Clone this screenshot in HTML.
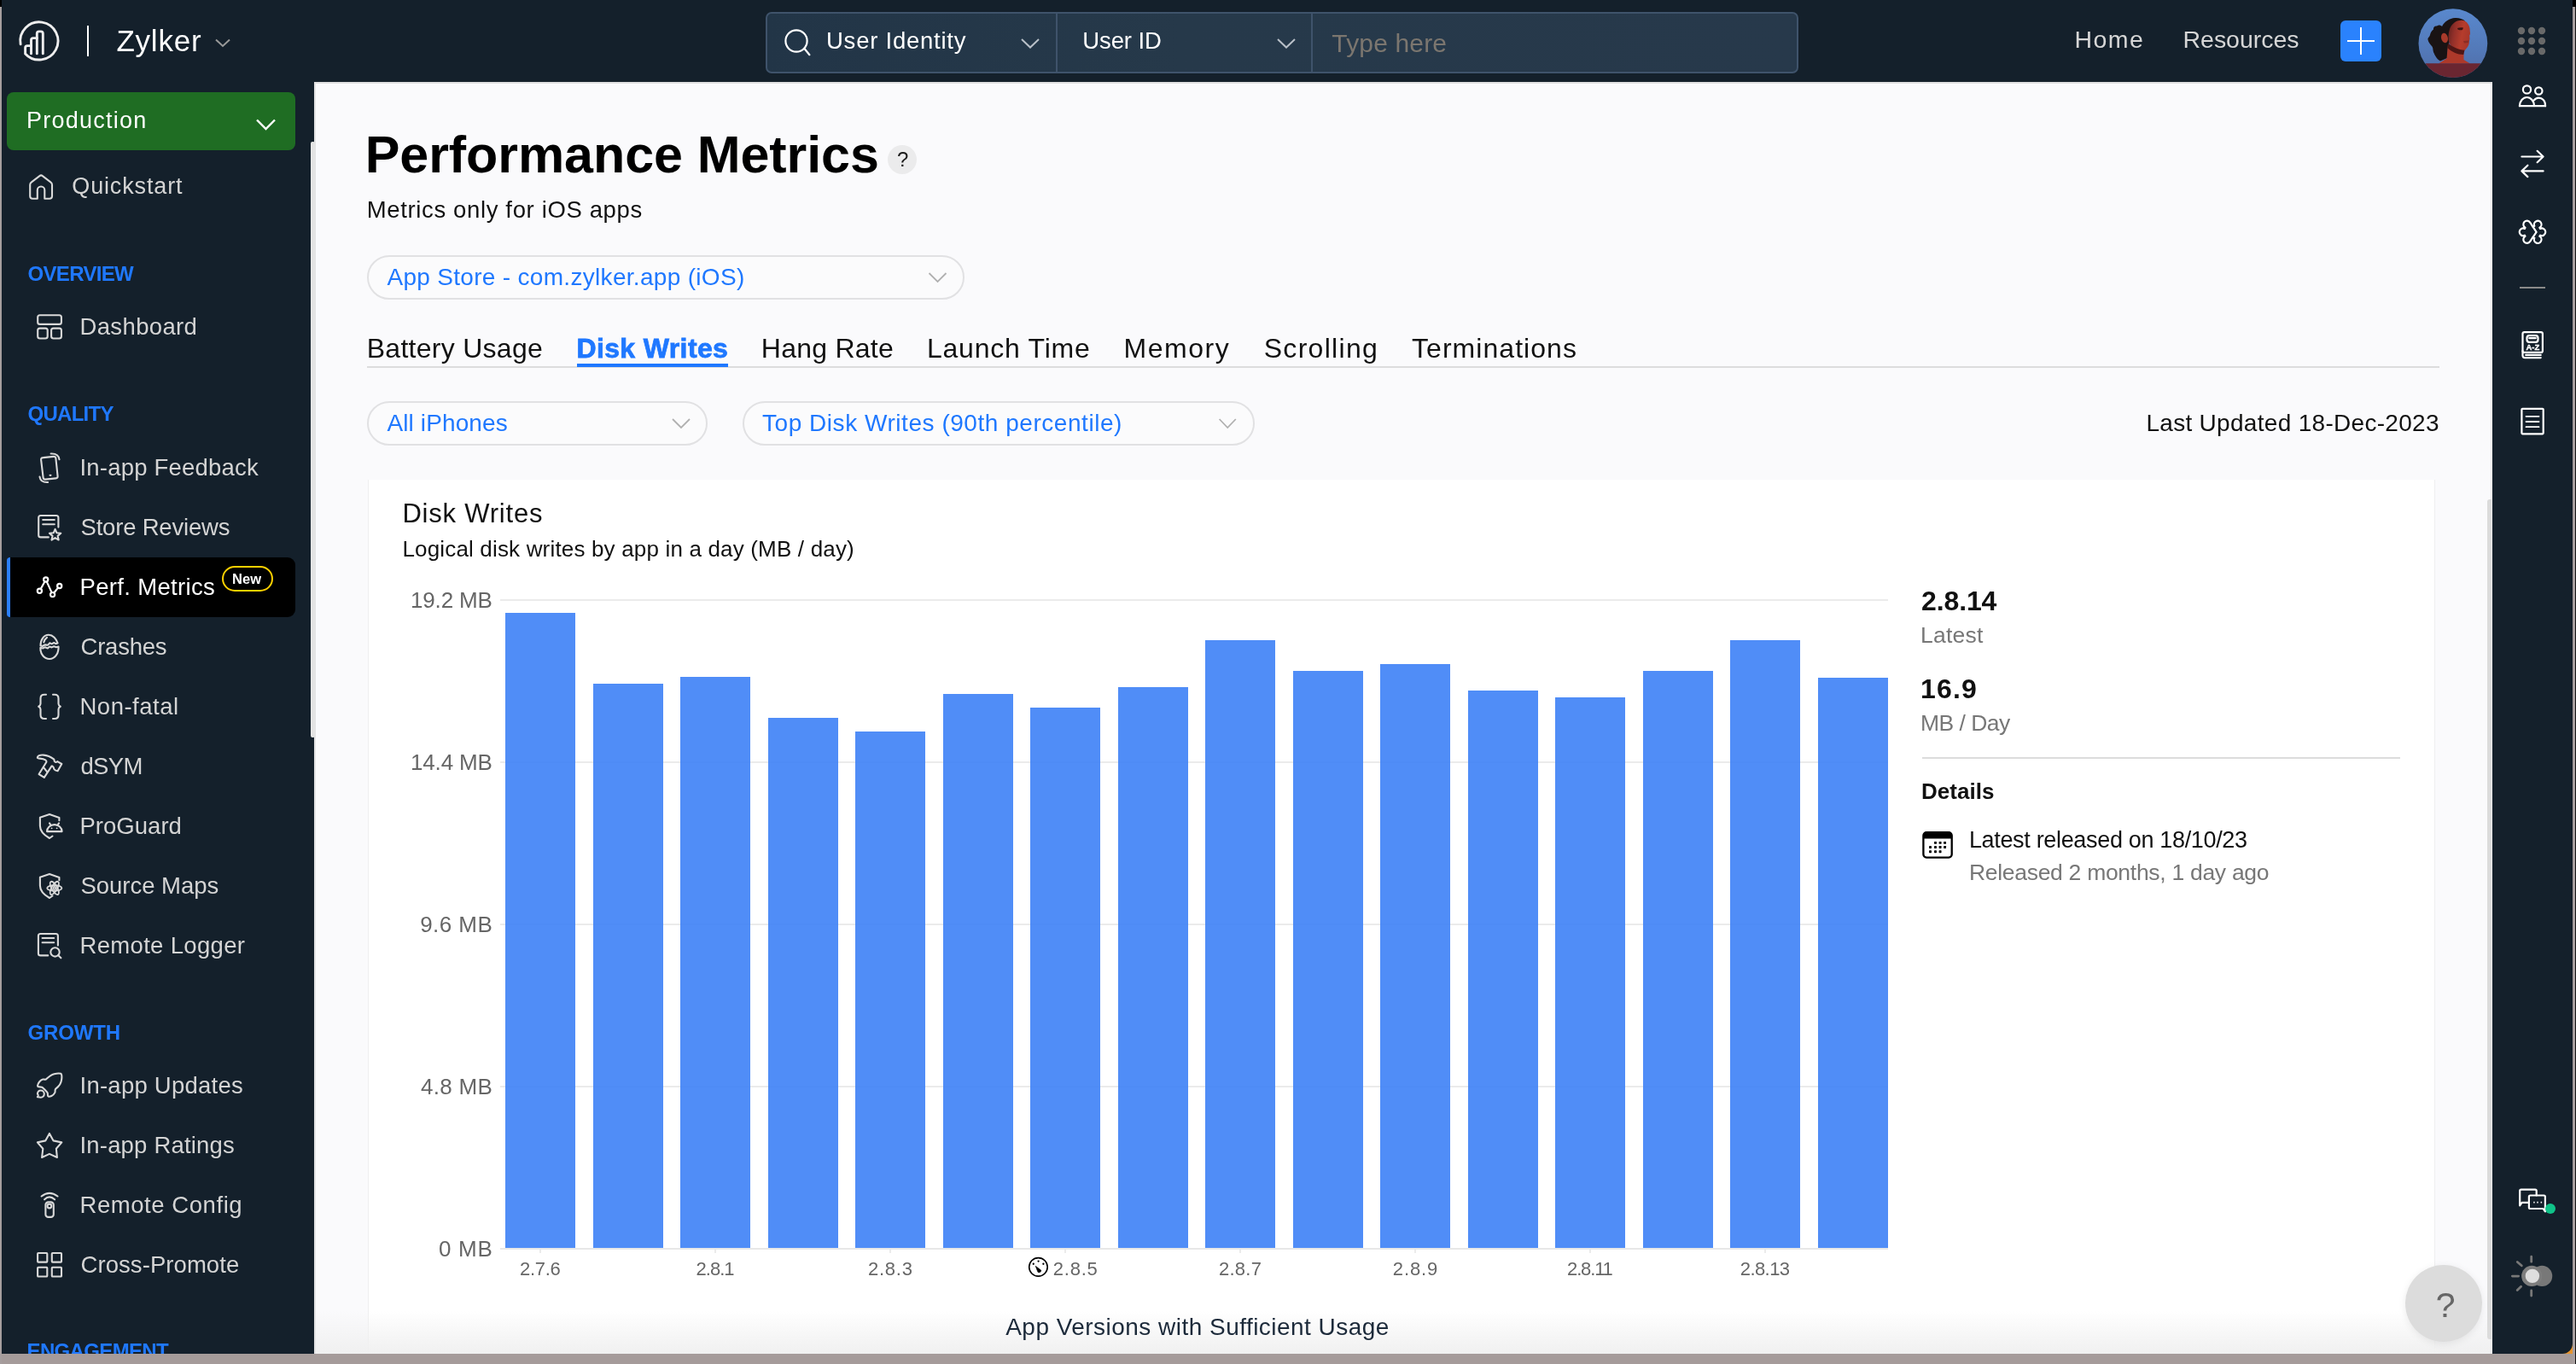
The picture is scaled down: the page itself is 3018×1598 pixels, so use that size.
<!DOCTYPE html>
<html><head><meta charset="utf-8"><title>Performance Metrics</title>
<style>
*{box-sizing:border-box;margin:0;padding:0}
html,body{width:3018px;height:1598px;overflow:hidden;background:#14202b;font-family:"Liberation Sans",sans-serif}
body{position:relative}
.a{position:absolute}
.t{position:absolute;white-space:nowrap;font-family:"Liberation Sans",sans-serif}
svg{position:absolute;overflow:visible}
.ic{fill:none;stroke:#d9d9d9;stroke-width:2.1;stroke-linecap:round;stroke-linejoin:round}
.iw{fill:none;stroke:#fff;stroke-width:2.2;stroke-linecap:round;stroke-linejoin:round}
.pill{position:absolute;height:52px;border:2px solid #e1e1e3;border-radius:26px;background:#fbfbfc}
.gl{position:absolute;left:586px;width:1626px;height:2px;background:#ebebeb}
.bar{position:absolute;width:82px;background:rgba(61,129,246,0.9)}
.tick{position:absolute;top:1464px;width:2px;height:4px;background:#ebebeb}
</style></head>
<body>
<!-- main content -->
<div class="a" style="left:368px;top:96px;width:2552px;height:1490px;background:#fafafc;border-left:2px solid #e3e3e4;border-top:2px solid #e0e0e1"></div>
<div class="a" style="left:431px;top:562px;width:2422px;height:1024px;background:#fff;border-left:1px solid #efeff0;border-right:1px solid #efeff0"></div>
<div class="a" style="left:370px;top:1536px;width:2550px;height:50px;background:linear-gradient(to bottom,rgba(240,240,240,0),rgba(240,240,240,1))"></div>
<!-- sidebar scrollbar -->
<div class="a" style="left:364px;top:166px;width:5px;height:698px;background:#e4e4e4;border-radius:2px"></div>
<!-- content scrollbar -->
<div class="a" style="left:2918px;top:98px;width:2px;height:1488px;background:#e9e9ea"></div>
<div class="a" style="left:2914px;top:585px;width:5px;height:984px;background:#dbdbdb;border-radius:3px 0 0 3px"></div>
<!-- top search -->
<div class="a" style="left:897px;top:14px;width:1210px;height:72px;border:2px solid #3f536b;border-radius:7px;background:linear-gradient(to right,#223547,#26394a 40%,#27394b)"></div>
<div class="a" style="left:1237px;top:16px;width:2px;height:68px;background:#3f536b"></div>
<div class="a" style="left:1536px;top:16px;width:2px;height:68px;background:#3f536b"></div>
<!-- plus -->
<div class="a" style="left:2742px;top:24px;width:48px;height:48px;border-radius:6px;background:#2a82fd"></div>
<div class="a" style="left:2750px;top:47px;width:32px;height:2px;background:#fff"></div>
<div class="a" style="left:2765px;top:32px;width:2px;height:32px;background:#fff"></div>
<!-- production -->
<div class="a" style="left:8px;top:108px;width:338px;height:68px;border-radius:8px;background:#1f6d23"></div>
<!-- active item -->
<div class="a" style="left:8px;top:653px;width:338px;height:70px;border-radius:4px 9px 9px 4px;background:#000;border-left:4px solid #2b7fff"></div>
<div class="a" style="left:260px;top:663px;width:60px;height:30px;border:2.5px solid #ffd100;border-radius:15px"></div>
<!-- logo divider -->
<div class="a" style="left:102px;top:30px;width:2px;height:36px;background:#fff"></div>
<!-- pills -->
<div class="pill" style="left:430px;top:299px;width:700px"></div>
<div class="pill" style="left:430px;top:470px;width:399px"></div>
<div class="pill" style="left:870px;top:470px;width:600px"></div>
<!-- tabs line -->
<div class="a" style="left:430px;top:429px;width:2428px;height:2px;background:#dcdcdd"></div>
<div class="a" style="left:676px;top:426px;width:177px;height:4px;background:#1f78ff"></div>
<!-- help small -->
<div class="a" style="left:1040px;top:170px;width:34px;height:34px;border-radius:17px;background:#ebebec"></div>
<!-- help big -->
<div class="a" style="left:2818px;top:1482px;width:90px;height:90px;border-radius:45px;background:#dcdcdc;box-shadow:0 2px 10px rgba(0,0,0,.08)"></div>
<!-- right panel divider -->
<div class="a" style="left:2252px;top:887px;width:560px;height:2px;background:#dcdcdc"></div>
<!-- right sidebar divider -->
<div class="a" style="left:2952px;top:336px;width:30px;height:2px;background:#8a8a8a"></div>
<div class="gl" style="top:701.7px"></div>
<div class="gl" style="top:891.8px"></div>
<div class="gl" style="top:1081.8px"></div>
<div class="gl" style="top:1271.9px"></div>
<div class="gl" style="top:1462px;background:#e8e8e8"></div>
<div class="bar" style="left:592.4px;top:717.7px;height:744.3px"></div>
<div class="bar" style="left:694.9px;top:801.2px;height:660.8px"></div>
<div class="bar" style="left:797.4px;top:793.2px;height:668.8px"></div>
<div class="bar" style="left:899.9px;top:840.7px;height:621.3px"></div>
<div class="bar" style="left:1002.4px;top:856.8px;height:605.2px"></div>
<div class="bar" style="left:1104.8px;top:813.1px;height:648.9px"></div>
<div class="bar" style="left:1207.3px;top:829.2px;height:632.8px"></div>
<div class="bar" style="left:1309.8px;top:805.1px;height:656.9px"></div>
<div class="bar" style="left:1412.3px;top:749.9px;height:712.1px"></div>
<div class="bar" style="left:1514.8px;top:785.5px;height:676.5px"></div>
<div class="bar" style="left:1617.3px;top:777.5px;height:684.5px"></div>
<div class="bar" style="left:1719.8px;top:809.3px;height:652.7px"></div>
<div class="bar" style="left:1822.3px;top:817.0px;height:645.0px"></div>
<div class="bar" style="left:1924.8px;top:785.5px;height:676.5px"></div>
<div class="bar" style="left:2027.3px;top:749.9px;height:712.1px"></div>
<div class="bar" style="left:2129.8px;top:793.5px;height:668.5px"></div>
<div class="tick" style="left:632.4px"></div>
<div class="tick" style="left:837.4px"></div>
<div class="tick" style="left:1042.3px"></div>
<div class="tick" style="left:1247.3px"></div>
<div class="tick" style="left:1452.3px"></div>
<div class="tick" style="left:1657.3px"></div>
<div class="tick" style="left:1862.3px"></div>
<div class="tick" style="left:2067.3px"></div>
<div class="a" style="left:0;top:0;width:3018px;height:1598px;will-change:transform">
<svg class="" style="left:16px;top:18px" width="60" height="60" viewBox="0 0 60 60"><g fill="none" stroke="#eeeeee" stroke-width="2.9" stroke-linecap="round" stroke-linejoin="round">
<path d="M8.1 33.8 A22.1 22.1 0 1 1 13.6 44.9 L13.6 38 Q13.6 35.6 16 35.6 L20.5 35.6"/>
<path d="M20.5 44.9 L20.5 29 Q20.5 26.6 22.9 26.6 L27.3 26.6"/>
<path d="M27.3 44.9 L27.3 21.3 Q27.3 18.9 29.7 18.9 L31.9 18.9 Q34.3 18.9 34.3 21.3 L34.3 44.9"/></g></svg>
<svg style="left:0;top:0" width="1" height="1"><path d="M253 46.5 L261.0 54 L269 46.5" fill="none" stroke="#9a9a9a" stroke-width="2" stroke-linecap="butt" stroke-linejoin="miter"/></svg>
<svg style="left:0;top:0" width="1" height="1"><path d="M301 140.5 L311.5 151 L322 140.5" fill="none" stroke="#ffffff" stroke-width="2.4" stroke-linecap="butt" stroke-linejoin="miter"/></svg>
<svg style="left:0;top:0" width="1" height="1"><path d="M1197 46 L1207.0 55.5 L1217 46" fill="none" stroke="#b9c0c8" stroke-width="2" stroke-linecap="butt" stroke-linejoin="miter"/></svg>
<svg style="left:0;top:0" width="1" height="1"><path d="M1497 46 L1507.0 55.5 L1517 46" fill="none" stroke="#b9c0c8" stroke-width="2" stroke-linecap="butt" stroke-linejoin="miter"/></svg>
<svg style="left:0;top:0" width="1" height="1"><path d="M1088.5 320 L1098.5 330 L1108.5 320" fill="none" stroke="#b0b0b0" stroke-width="1.8" stroke-linecap="butt" stroke-linejoin="miter"/></svg>
<svg style="left:0;top:0" width="1" height="1"><path d="M788 491 L798.0 501 L808 491" fill="none" stroke="#b0b0b0" stroke-width="1.8" stroke-linecap="butt" stroke-linejoin="miter"/></svg>
<svg style="left:0;top:0" width="1" height="1"><path d="M1428.6 491 L1438.1999999999998 501 L1447.8 491" fill="none" stroke="#b0b0b0" stroke-width="1.8" stroke-linecap="butt" stroke-linejoin="miter"/></svg>
<svg class="iw" style="left:915px;top:30px" width="40" height="40" viewBox="0 0 40 40"><circle cx="18" cy="18" r="12.6"/><path d="M27.3 26.8 L33.4 34.2"/></svg>
<svg style="left:0;top:0" width="1" height="1"><circle cx="2954" cy="36" r="4.2" fill="#696969"/><circle cx="2954" cy="48" r="4.2" fill="#696969"/><circle cx="2954" cy="60" r="4.2" fill="#696969"/><circle cx="2966" cy="36" r="4.2" fill="#696969"/><circle cx="2966" cy="48" r="4.2" fill="#696969"/><circle cx="2966" cy="60" r="4.2" fill="#696969"/><circle cx="2978" cy="36" r="4.2" fill="#696969"/><circle cx="2978" cy="48" r="4.2" fill="#696969"/><circle cx="2978" cy="60" r="4.2" fill="#696969"/></svg>
<svg class="ic" style="left:28px;top:198px" width="40" height="40" viewBox="0 0 40 40"><path d="M15.8 34.75 L10.2 34.75 Q7.2 34.75 7.2 31.75 L7.2 18.5 Q7.2 16.5 8.9 15.3 L18.4 8.1 Q20.1 6.8 21.8 8.1 L31.3 15.3 Q33 16.5 33 18.5 L33 31.75 Q33 34.75 30 34.75 L24.3 34.75 L24.3 24.75 A4.25 4.25 0 0 0 15.8 24.75 Z"/></svg>
<svg class="ic" style="left:38px;top:362px" width="40" height="40" viewBox="0 0 40 40"><rect x="6.2" y="7.2" width="27.7" height="10.7" rx="2.5"/><rect x="6.2" y="22.6" width="11.5" height="11.9" rx="2.5"/><rect x="22.1" y="22.6" width="11.8" height="11.9" rx="2.5"/></svg>
<svg class="ic" style="left:38px;top:526px" width="40" height="44" viewBox="0 0 40 44"><path d="M12.6 10.1 L24.8 8.9 Q27.2 8.7 27.4 11.1 L29.6 31.9 Q29.8 34.2 27.5 34.4 L15.2 35.6 Q12.9 35.8 12.6 33.5 L10.1 12.7 Q9.9 10.3 12.6 10.1 Z"/><ellipse cx="21" cy="30.8" rx="1.6" ry="1.1" fill="#d9d9d9" stroke="none"/><path d="M21.6 5.5 Q30.5 5 31.5 12.3"/><path d="M8.5 32.6 Q9.5 39.5 18.1 39"/></svg>
<svg class="ic" style="left:38px;top:598px" width="40" height="40" viewBox="0 0 40 40"><path d="M18.8 31.4 L9.7 31.4 Q7.2 31.4 7.2 28.9 L7.2 8.5 Q7.2 6 9.7 6 L27.9 6 Q30.4 6 30.4 8.5 L30.4 19.6"/><path d="M12.2 11 L25.8 11 M12.2 16.3 L25.8 16.3"/><path d="M26.60 21.90 L28.48 26.31 L33.26 26.74 L29.64 29.89 L30.71 34.56 L26.60 32.10 L22.49 34.56 L23.56 29.89 L19.94 26.74 L24.72 26.31 Z"/></svg>
<svg class="iw" style="left:38px;top:668px" width="40" height="40" viewBox="0 0 40 40"><path d="M9.7 22 L14.5 13.3 M16.7 13.4 L22.6 26.1 M25.3 26.5 L30 20.6"/><circle cx="8.4" cy="24.3" r="2.6"/><circle cx="15.7" cy="11" r="2.6"/><circle cx="23.6" cy="28.6" r="2.6"/><circle cx="31.7" cy="18.5" r="2.6"/></svg>
<svg class="ic" style="left:38px;top:738px" width="40" height="40" viewBox="0 0 40 40"><path d="M9.5 18.5 C9.5 11 13.5 5.7 19 5.7 C24 5.7 28 10.5 29.6 15.5 L27.3 16.2 L25.2 15 L22.6 16.4 L20.2 15.3 L18.2 17.7 L14.7 17.4 L11.7 19 Z"/><path d="M9.4 20.8 L12.3 21.5 L14.7 20.2 L17.9 21.4 L20.2 19.5 L22.6 20.4 L25.2 19.2 L27.9 20.2 L30.5 19.6 C31 28 26 34 20 34 C14 34 9 28.5 9.4 20.8 Z"/><path d="M17 8.8 Q14.2 10.8 13.3 14.4"/></svg>
<svg class="ic" style="left:38px;top:808px" width="40" height="40" viewBox="0 0 40 40"><path d="M16 5.7 L14 5.7 Q9.5 5.7 9.5 10.2 L9.5 16.5 Q9.5 18.6 7.2 19.8 Q9.5 21 9.5 23.1 L9.5 29.5 Q9.5 34 14 34 L16 34"/><path d="M24 5.7 L26 5.7 Q30.5 5.7 30.5 10.2 L30.5 16.5 Q30.5 18.6 32.8 19.8 Q30.5 21 30.5 23.1 L30.5 29.5 Q30.5 34 26 34 L24 34"/></svg>
<svg class="ic" style="left:38px;top:878px" width="40" height="40" viewBox="0 0 40 40"><path d="M5.9 9.1 C7 6.5 11 6.4 13.2 6.6 C16 6.8 20.5 8 25 11.4 C26 12.2 25.3 13.2 25.8 13.8 C26.3 14.8 27 15.1 27.6 15 C28.4 14.9 28.8 14.1 29.3 14.1 L34.3 17 L29.6 25.2 C28.5 25 26 24 25.5 23.2 C24.8 22.2 25 21.2 24.3 20.5 C23.8 19.8 23 19.3 22.6 19.4 L13.8 32.8 L7.6 29 L16.4 14.7 C16.6 13.5 16 12.8 15.2 12.3 C13.5 11.2 11 10.8 8.8 10.6 C6.5 10.5 5.5 10 5.9 9.1 Z"/><path d="M12.9 20.8 L17.3 26.4"/></svg>
<svg class="ic" style="left:38px;top:948px" width="40" height="40" viewBox="0 0 40 40"><path d="M31.4 13.2 L31.4 10 L20 5.9 L8.9 9.7 L8.9 19.5 C8.9 25 13 30 20 34 L23.5 31.5"/><path d="M17 26.1 A8.8 8 0 0 1 34.6 26.1 Z"/><path d="M20 16.4 L21.7 19 M31 16.4 L29.3 19"/><circle cx="22.6" cy="22.3" r="0.9" fill="#d9d9d9" stroke="none"/><circle cx="28.6" cy="22.3" r="0.9" fill="#d9d9d9" stroke="none"/></svg>
<svg class="ic" style="left:38px;top:1018px" width="40" height="40" viewBox="0 0 40 40"><path d="M31.4 13.2 L31.4 10 L20 5.9 L8.9 9.7 L8.9 19.5 C8.9 25 13 30 20 34 L23.5 31.5"/><g stroke-width="1.8"><ellipse cx="25.8" cy="22.4" rx="8.6" ry="3.3"/><ellipse cx="25.8" cy="22.4" rx="8.6" ry="3.3" transform="rotate(60 25.8 22.4)"/><ellipse cx="25.8" cy="22.4" rx="8.6" ry="3.3" transform="rotate(120 25.8 22.4)"/><circle cx="25.8" cy="22.4" r="1.4"/></g></svg>
<svg class="ic" style="left:38px;top:1088px" width="40" height="40" viewBox="0 0 40 40"><path d="M18.2 31.4 L9.4 31.4 Q6.9 31.4 6.9 28.9 L6.9 8.5 Q6.9 6 9.4 6 L27.4 6 Q29.9 6 29.9 8.5 L29.9 19.6"/><path d="M11.6 11 L25.2 11 M11.6 16.3 L25.2 16.3"/><circle cx="26.5" cy="27.4" r="5.2"/><path d="M30.3 31.2 L33.4 34.3"/></svg>
<svg class="ic" style="left:38px;top:1252px" width="40" height="40" viewBox="0 0 40 40"><path d="M15.8 12.6 C19 9.5 22.5 7 25.5 6.2 C28.5 5.4 31.5 5.3 33.1 5.7 C34.3 6.2 34.5 9.5 34.2 12.3 C33.9 14.5 33.3 16.5 32.3 18.2 C31 20.5 29 22.3 27 23.8 C26.3 25 26.8 26.5 26.4 27.9 C25.5 29.8 24 31.2 22.3 32 C21 32.6 19.6 32.9 18.8 32.6 C18 32.2 17.9 31.5 17.9 30.8 C17.9 29.9 18 29 17.6 28.2 C16.8 26.8 15.3 25.5 14.1 24.3 C13.1 23.3 12.2 22.2 11.1 21.7 C9.6 21.1 7.6 21.6 6.7 21.1 C6 20.6 6 19.7 6.3 18.8 C6.7 17.4 7.5 16.1 8.5 15 C9.6 13.8 10.9 13 12.3 12.6 C13.5 12.3 14.7 12.9 15.8 12.6 Z"/><path d="M5.9 33.1 C6.6 32.5 6.9 31.5 6.7 30.8 C6.5 30.2 5.8 29.9 5.9 29.3 C6.2 27 7.7 25.5 9.7 25.5 C12 25.5 13.8 27.2 13.8 29.5 C13.8 32 12 33.7 9.7 33.7 C8.3 33.7 7 33.3 5.9 33.1 Z"/></svg>
<svg class="ic" style="left:38px;top:1322px" width="40" height="40" viewBox="0 0 40 40"><path d="M19.9 5.9 L24.6 14.4 L34.3 16.4 L27.9 23.8 L28.9 34 L19.9 29.9 L11.1 34 L12.3 23.8 L5.9 16.4 L15.2 14.4 Z"/></svg>
<svg class="ic" style="left:38px;top:1392px" width="40" height="40" viewBox="0 0 40 40"><rect x="15.4" y="16.4" width="9.4" height="17.5" rx="3.2"/><circle cx="19.9" cy="21" r="2.4"/><path d="M10.6 9.5 Q19.9 2.3 29.5 9.5"/><path d="M14.1 13.3 Q19.9 7.6 26.1 13.3"/></svg>
<svg class="ic" style="left:38px;top:1462px" width="40" height="40" viewBox="0 0 40 40"><rect x="6.1" y="6" width="11.2" height="10.6" rx="0.8"/><rect x="22.8" y="6" width="11.2" height="10.6" rx="0.8"/><rect x="6.1" y="22.8" width="11.2" height="10.7" rx="0.8"/><rect x="22.8" y="22.8" width="11.2" height="10.7" rx="0.8"/></svg>
<svg class="iw" style="left:2942px;top:92px" width="50" height="40" viewBox="0 0 50 40"><circle cx="18.5" cy="12.9" r="4.6"/><circle cx="32.3" cy="14.5" r="4.2"/><path d="M10 32.1 A8.5 10.1 0 0 1 27 32.1"/><path d="M26.6 25.6 A7.7 8.9 0 0 1 40 32.1"/><path d="M10 32.1 L40 32.1" stroke-linecap="square"/></svg>
<svg class="iw" style="left:2942px;top:170px" width="50" height="44" viewBox="0 0 50 44"><path d="M12.4 13.5 L37.6 13.5 M30.6 6.8 L37.6 13.5 L30.6 20.2"/><path d="M37.6 30.4 L12.4 30.4 M19.4 23.7 L12.4 30.4 L19.4 37.1"/></svg>
<svg class="iw" style="left:2942px;top:250px" width="50" height="40" viewBox="0 0 50 40"><path d="M29.6 21.8 L22.18 10.62 A4.3 4.3 0 1 0 16.5 16.75 L15.89 17.94 A4.3 4.3 0 1 0 15.89 25.66 L16.5 26.85 A4.3 4.3 0 1 0 22.18 32.98 Z"/><path d="M25.2 15.2 L27.3 14.8 A4.3 4.3 0 1 1 33.3 16.75 L34.11 17.94 A4.3 4.3 0 1 1 34.11 25.66 L33.3 26.85 A4.3 4.3 0 1 1 27.3 28.8 L25.2 28.4"/></svg>
<svg class="iw" style="left:2942px;top:380px" width="50" height="46" viewBox="0 0 50 46"><rect x="13.5" y="9.1" width="23.4" height="23.8" rx="2"/><path d="M13.5 31 L13.5 36.5 Q13.5 39.1 16.1 39.1 L34.7 39.1 M17.2 35.9 L34.7 35.9"/><rect x="18.5" y="13.1" width="13" height="7.8" rx="2.8"/><path d="M21.3 16.2 L28.7 16.2"/><text x="25.4" y="30.3" text-anchor="middle" font-family="Liberation Sans, sans-serif" font-weight="700" font-size="9.5" fill="#fff" stroke="#fff" stroke-width="0.35">A-Z</text></svg>
<svg class="iw" style="left:2942px;top:470px" width="50" height="46" viewBox="0 0 50 46"><rect x="12.4" y="8.8" width="25.3" height="29.5" rx="1"/><path d="M17.5 17.8 L32.5 17.8 M17.5 24 L32.5 24 M17.5 30.2 L32.5 30.2" stroke-width="1.8"/></svg>
<svg class="iw" style="left:2942px;top:1384px" width="56" height="42" viewBox="0 0 56 42"><path d="M20.9 24.9 L12.6 24.9 L10.2 28.3 L10.2 11.2 Q10.2 9.7 11.7 9.7 L28.2 9.7 Q29.7 9.7 29.7 11.2 L29.7 16.5"/><path d="M22.4 16.5 L38.4 16.5 Q39.9 16.5 39.9 18 L39.9 35.5 L37.5 32 L22.4 32 Q20.9 32 20.9 30.5 L20.9 18 Q20.9 16.5 22.4 16.5 Z"/><path d="M26.2 24.6 L27.7 24.6 M30.2 24.6 L31.7 24.6 M34.6 24.6 L36.1 24.6" stroke-width="1.6" stroke-linecap="butt"/><circle cx="46" cy="32" r="6" fill="#10c389" stroke="none"/></svg>
<svg style="left:0;top:0" width="1" height="1"><path d="M2965.7 1472.2 L2965.7 1478.2 M2965.7 1512 L2965.7 1518.1 M2943.4 1495.1 L2950.6 1495.1 M2949.3 1478.5 L2954.3 1482.8 M2949.2 1511.6 L2953.6 1507.2" stroke="#787878" stroke-width="2.8" stroke-linecap="round" fill="none"/><circle cx="2978.2" cy="1494.9" r="12.05" fill="#787878"/><circle cx="2966.2" cy="1494.9" r="12.05" fill="#7e7e7e"/><circle cx="2966.9" cy="1494.9" r="8.2" fill="#dedede"/></svg>
<svg class="" style="left:2252px;top:974px" width="36" height="32" viewBox="0 0 36 32"><rect x="1.4" y="1.2" width="33.3" height="29.4" rx="3.6" fill="none" stroke="#000" stroke-width="2.3"/><path d="M1.4 8 L1.4 4.8 Q1.4 1.2 5 1.2 L31.1 1.2 Q34.7 1.2 34.7 4.8 L34.7 8 Z" fill="#000" stroke="#000" stroke-width="1"/><rect x="14.05" y="11.95" width="2.9" height="2.9" rx="0.4" fill="#000"/><rect x="19.65" y="11.95" width="2.9" height="2.9" rx="0.4" fill="#000"/><rect x="25.15" y="11.95" width="2.9" height="2.9" rx="0.4" fill="#000"/><rect x="8.05" y="17.05" width="2.9" height="2.9" rx="0.4" fill="#000"/><rect x="14.05" y="17.05" width="2.9" height="2.9" rx="0.4" fill="#000"/><rect x="19.65" y="17.05" width="2.9" height="2.9" rx="0.4" fill="#000"/><rect x="25.15" y="17.05" width="2.9" height="2.9" rx="0.4" fill="#000"/><rect x="8.05" y="22.35" width="2.9" height="2.9" rx="0.4" fill="#000"/><rect x="14.05" y="22.35" width="2.9" height="2.9" rx="0.4" fill="#000"/><rect x="19.65" y="22.35" width="2.9" height="2.9" rx="0.4" fill="#000"/></svg>
<svg class="" style="left:1196px;top:1466px" width="40" height="38" viewBox="0 0 40 38"><circle cx="20.45" cy="18.35" r="10.75" fill="none" stroke="#000" stroke-width="1.6"/><path d="M17.2 17.2 L23.6 22.0 Q24.2 23.4 22.6 24.4 Q21.0 25.2 20.0 24.4 Z" fill="#000" stroke="#000" stroke-width="0.6" stroke-linejoin="round"/><circle cx="20.6" cy="11.6" r="1.15" fill="#000"/><circle cx="14.75" cy="14.75" r="1.15" fill="#000"/><circle cx="26.4" cy="14.75" r="1.15" fill="#000"/></svg>
<svg class="" style="left:2826px;top:4px" width="96" height="92" viewBox="0 0 96 92"><defs><clipPath id="av"><circle cx="47.9" cy="46.7" r="40.4"/></clipPath><linearGradient id="sky" x1="0" y1="0" x2="0" y2="1"><stop offset="0" stop-color="#5a8ad0"/><stop offset="0.6" stop-color="#5379b8"/><stop offset="1" stop-color="#4f6aa4"/></linearGradient>
<linearGradient id="fc" x1="0" y1="0" x2="1" y2="0.25"><stop offset="0" stop-color="#5f201d"/><stop offset="0.35" stop-color="#93302a"/><stop offset="0.7" stop-color="#b63c2c"/><stop offset="1" stop-color="#a8372a"/></linearGradient></defs>
<g clip-path="url(#av)"><rect x="0" y="0" width="96" height="92" fill="url(#sky)"/>
<path d="M35 27 C38 21 44 17.5 50 17 C55 16.6 59 18 62 20.5 L58 23 L48 30 L44 44 L42 52 L41 64 L33 67.5 C30 66 27 62 25.5 58 C24 55 25 52 23 50 C21.5 48 19 46 18.5 42.5 C18 40 20.5 39.5 21 37 C21.5 34 23 32 25 30.5 C24.5 28 26.5 26 29 26.5 C31 25 33.5 25.5 35 27 Z" fill="#191314"/>
<path d="M44 30 C47 22 54 19 60 20 C64 21 66.5 24.5 67.5 29 L67.8 33 C68.2 35 68 36.5 67.2 37.5 L67.5 41 C67.5 43 66.5 44 66.8 45.5 C67 48 65 52 61 55.5 C57 56 50 53 46 50 C42 46 41.5 38 44 30 Z" fill="url(#fc)"/>
<path d="M42 48 C46 52 54 56 60.5 55.5 L60.5 66 L68 70.5 L31 70.5 L40.5 64.5 Z" fill="#ad392a"/>
<path d="M42.3 46.5 C47 51 55 54.5 61.5 54.8 L60.2 60 C53 60 46 56.5 41.5 52 Z" fill="#4e1614"/>
<ellipse cx="38" cy="40.5" rx="3.9" ry="5.8" fill="#a93a2b" transform="rotate(-12 38 40.5)"/>
<path d="M53 29 C55 28 58 28 60 28.6 L59 31 C57 31.6 55 31.2 53.5 30.4 Z" fill="#3a1413"/>
<path d="M60 44 L66.5 43.5 L66 46 L61 46.5 Z" fill="#8a2c24"/>
<path d="M16 70.2 L80 70.2 L80 92 L16 92 Z" fill="#6a2631"/></g></svg>
</div>
<div class="a" style="left:0;top:0;width:3018px;height:1598px;will-change:transform">
<span class="t" style="left:136.4px;top:30.4px;font-size:35px;line-height:35px;color:#fff;letter-spacing:0.80px">Zylker</span>
<span class="t" style="left:968.0px;top:34.3px;font-size:27.5px;line-height:27.5px;color:#fff;letter-spacing:0.76px">User Identity</span>
<span class="t" style="left:1268.3px;top:34.3px;font-size:27.5px;line-height:27.5px;color:#fff;letter-spacing:-0.11px">User ID</span>
<span class="t" style="left:1560.3px;top:35.6px;font-size:30px;line-height:30px;color:#7b766f;letter-spacing:0.16px">Type here</span>
<span class="t" style="left:2430.5px;top:32.4px;font-size:28.5px;line-height:28.5px;color:#d6d6d6;letter-spacing:1.44px">Home</span>
<span class="t" style="left:2557.5px;top:32.4px;font-size:28.5px;line-height:28.5px;color:#d6d6d6;letter-spacing:-0.02px">Resources</span>
<span class="t" style="left:31.0px;top:127.7px;font-size:27px;line-height:27px;color:#fff;letter-spacing:1.25px">Production</span>
<span class="t" style="left:84.3px;top:205.1px;font-size:27px;line-height:27px;color:#d4d4d4;letter-spacing:0.85px">Quickstart</span>
<span class="t" style="left:32.6px;top:308.7px;font-size:24px;line-height:24px;font-weight:700;color:#1f78ff;letter-spacing:-0.70px">OVERVIEW</span>
<span class="t" style="left:93.5px;top:368.7px;font-size:27.5px;line-height:27.5px;color:#d4d4d4;letter-spacing:0.36px">Dashboard</span>
<span class="t" style="left:32.6px;top:472.7px;font-size:24px;line-height:24px;font-weight:700;color:#1f78ff;letter-spacing:-0.75px">QUALITY</span>
<span class="t" style="left:93.5px;top:533.7px;font-size:27.5px;line-height:27.5px;color:#d4d4d4;letter-spacing:0.20px">In-app Feedback</span>
<span class="t" style="left:94.5px;top:603.7px;font-size:27.5px;line-height:27.5px;color:#d4d4d4;letter-spacing:-0.20px">Store Reviews</span>
<span class="t" style="left:93.5px;top:673.7px;font-size:27.5px;line-height:27.5px;color:#fff;letter-spacing:0.33px">Perf. Metrics</span>
<span class="t" style="left:94.5px;top:743.7px;font-size:27.5px;line-height:27.5px;color:#d4d4d4;letter-spacing:-0.22px">Crashes</span>
<span class="t" style="left:93.5px;top:813.7px;font-size:27.5px;line-height:27.5px;color:#d4d4d4;letter-spacing:0.50px">Non-fatal</span>
<span class="t" style="left:94.5px;top:883.7px;font-size:27.5px;line-height:27.5px;color:#d4d4d4;letter-spacing:-0.69px">dSYM</span>
<span class="t" style="left:93.5px;top:953.7px;font-size:27.5px;line-height:27.5px;color:#d4d4d4;letter-spacing:0.02px">ProGuard</span>
<span class="t" style="left:94.5px;top:1023.7px;font-size:27.5px;line-height:27.5px;color:#d4d4d4;letter-spacing:-0.03px">Source Maps</span>
<span class="t" style="left:93.5px;top:1093.7px;font-size:27.5px;line-height:27.5px;color:#d4d4d4;letter-spacing:0.32px">Remote Logger</span>
<span class="t" style="left:272.0px;top:670.0px;font-size:16.5px;line-height:16.5px;font-weight:700;color:#fff;letter-spacing:0.05px">New</span>
<span class="t" style="left:32.6px;top:1197.7px;font-size:24px;line-height:24px;font-weight:700;color:#1f78ff;letter-spacing:-0.16px">GROWTH</span>
<span class="t" style="left:93.5px;top:1257.7px;font-size:27.5px;line-height:27.5px;color:#d4d4d4;letter-spacing:0.25px">In-app Updates</span>
<span class="t" style="left:93.5px;top:1327.7px;font-size:27.5px;line-height:27.5px;color:#d4d4d4;letter-spacing:0.18px">In-app Ratings</span>
<span class="t" style="left:93.5px;top:1397.7px;font-size:27.5px;line-height:27.5px;color:#d4d4d4;letter-spacing:0.56px">Remote Config</span>
<span class="t" style="left:94.5px;top:1467.7px;font-size:27.5px;line-height:27.5px;color:#d4d4d4;letter-spacing:0.07px">Cross-Promote</span>
<span class="t" style="left:31.6px;top:1571.4px;font-size:24px;line-height:24px;font-weight:700;color:#1f78ff;letter-spacing:-0.66px">ENGAGEMENT</span>
<span class="t" style="left:427.7px;top:151.4px;font-size:61px;line-height:61px;font-weight:700;color:#000;letter-spacing:-0.07px">Performance Metrics</span>
<span class="t" style="left:1051.0px;top:175.4px;font-size:24px;line-height:24px;color:#1a1a1a;letter-spacing:0.00px">?</span>
<span class="t" style="left:429.7px;top:231.7px;font-size:27.5px;line-height:27.5px;color:#111;letter-spacing:0.64px">Metrics only for iOS apps</span>
<span class="t" style="left:453.4px;top:311.3px;font-size:28px;line-height:28px;color:#1f78ff;letter-spacing:0.31px">App Store - com.zylker.app (iOS)</span>
<span class="t" style="left:429.7px;top:391.9px;font-size:32px;line-height:32px;color:#111;letter-spacing:0.28px">Battery Usage</span>
<span class="t" style="left:675.4px;top:391.9px;font-size:32px;line-height:32px;font-weight:700;-webkit-text-stroke:0.8px #1f78ff;color:#1f78ff;letter-spacing:0.38px">Disk Writes</span>
<span class="t" style="left:891.8px;top:391.9px;font-size:32px;line-height:32px;color:#111;letter-spacing:0.25px">Hang Rate</span>
<span class="t" style="left:1086.0px;top:391.9px;font-size:32px;line-height:32px;color:#111;letter-spacing:0.76px">Launch Time</span>
<span class="t" style="left:1316.5px;top:391.9px;font-size:32px;line-height:32px;color:#111;letter-spacing:1.55px">Memory</span>
<span class="t" style="left:1480.7px;top:391.9px;font-size:32px;line-height:32px;color:#111;letter-spacing:1.30px">Scrolling</span>
<span class="t" style="left:1654.0px;top:391.9px;font-size:32px;line-height:32px;color:#111;letter-spacing:1.05px">Terminations</span>
<span class="t" style="left:453.4px;top:481.6px;font-size:28px;line-height:28px;color:#1f78ff;letter-spacing:0.13px">All iPhones</span>
<span class="t" style="left:893.0px;top:481.6px;font-size:28px;line-height:28px;color:#1f78ff;letter-spacing:0.54px">Top Disk Writes (90th percentile)</span>
<span class="t" style="left:2514.4px;top:481.9px;font-size:28px;line-height:28px;color:#111;letter-spacing:0.30px">Last Updated 18-Dec-2023</span>
<span class="t" style="left:471.4px;top:585.8px;font-size:31px;line-height:31px;color:#111;letter-spacing:0.79px">Disk Writes</span>
<span class="t" style="left:471.4px;top:629.5px;font-size:26px;line-height:26px;color:#111;letter-spacing:0.17px">Logical disk writes by app in a day (MB / day)</span>
<span class="t" style="left:481.0px;top:689.8px;font-size:26px;line-height:26px;color:#666;letter-spacing:-0.16px">19.2 MB</span>
<span class="t" style="left:481.0px;top:879.9px;font-size:26px;line-height:26px;color:#666;letter-spacing:-0.16px">14.4 MB</span>
<span class="t" style="left:492.2px;top:1069.9px;font-size:26px;line-height:26px;color:#666;letter-spacing:0.45px">9.6 MB</span>
<span class="t" style="left:493.0px;top:1260.0px;font-size:26px;line-height:26px;color:#666;letter-spacing:0.29px">4.8 MB</span>
<span class="t" style="left:514.0px;top:1450.1px;font-size:26px;line-height:26px;color:#666;letter-spacing:0.72px">0 MB</span>
<span class="t" style="left:609.1px;top:1476.0px;font-size:22px;line-height:22px;color:#666;letter-spacing:-0.32px">2.7.6</span>
<span class="t" style="left:815.5px;top:1476.0px;font-size:22px;line-height:22px;color:#666;letter-spacing:-0.97px">2.8.1</span>
<span class="t" style="left:1016.9px;top:1476.0px;font-size:22px;line-height:22px;color:#666;letter-spacing:0.80px">2.8.3</span>
<span class="t" style="left:1233.8px;top:1476.0px;font-size:22px;line-height:22px;color:#666;letter-spacing:0.75px">2.8.5</span>
<span class="t" style="left:1427.9px;top:1476.0px;font-size:22px;line-height:22px;color:#666;letter-spacing:0.30px">2.8.7</span>
<span class="t" style="left:1631.8px;top:1476.0px;font-size:22px;line-height:22px;color:#666;letter-spacing:0.88px">2.8.9</span>
<span class="t" style="left:1836.1px;top:1476.0px;font-size:22px;line-height:22px;color:#666;letter-spacing:-1.16px">2.8.11</span>
<span class="t" style="left:2038.8px;top:1476.0px;font-size:22px;line-height:22px;color:#666;letter-spacing:-0.59px">2.8.13</span>
<span class="t" style="left:1178.2px;top:1540.8px;font-size:28px;line-height:28px;color:#1c2a3a;letter-spacing:0.47px">App Versions with Sufficient Usage</span>
<span class="t" style="left:2251.0px;top:687.9px;font-size:32px;line-height:32px;font-weight:700;color:#111;letter-spacing:-0.11px">2.8.14</span>
<span class="t" style="left:2250.0px;top:731.4px;font-size:26.5px;line-height:26.5px;color:#777;letter-spacing:0.23px">Latest</span>
<span class="t" style="left:2250.0px;top:791.3px;font-size:32px;line-height:32px;font-weight:700;color:#111;letter-spacing:1.17px">16.9</span>
<span class="t" style="left:2250.0px;top:833.6px;font-size:26.5px;line-height:26.5px;color:#777;letter-spacing:-0.53px">MB / Day</span>
<span class="t" style="left:2251.0px;top:913.7px;font-size:26px;line-height:26px;font-weight:700;color:#111;letter-spacing:0.03px">Details</span>
<span class="t" style="left:2306.9px;top:970.5px;font-size:27px;line-height:27px;color:#111;letter-spacing:-0.33px">Latest released on 18/10/23</span>
<span class="t" style="left:2306.9px;top:1008.6px;font-size:26.5px;line-height:26.5px;color:#777;letter-spacing:-0.29px">Released 2 months, 1 day ago</span>
<span class="t" style="left:2853.7px;top:1508.7px;font-size:41px;line-height:41px;color:#666;letter-spacing:0.00px">?</span>
</div>
<div class="a" style="left:3002px;top:1574px;width:12px;height:12px;background:#e6952f"></div>
<div class="a" style="left:3002px;top:1574px;width:12px;height:12px;background:#14202b;border-bottom-right-radius:12px"></div>
<!-- window edges -->
<div class="a" style="left:0;top:1586px;width:3018px;height:12px;background:#a59b9a"></div>
<div class="a" style="left:0;top:0;width:2px;height:1598px;background:#a69e9e"></div>
<div class="a" style="left:0;top:0;width:2px;height:8px;background:#000"></div>
<div class="a" style="left:3014px;top:0;width:3px;height:1598px;background:#a8a0a0"></div>
<div class="a" style="left:3017px;top:0;width:1px;height:1598px;background:#111"></div>
<div class="a" style="left:3014px;top:0;width:4px;height:8px;background:#000"></div>
<script>(function(){var d=window.devicePixelRatio||1,w=window.innerWidth||3018;if(d>1.2&&Math.abs(w*d-3018)<64){var s=w/3018,h=document.documentElement;document.body.style.transformOrigin='0 0';document.body.style.transform='scale('+s+')';h.style.width=w+'px';h.style.height=Math.round(1598*s)+'px';}})();</script>
</body></html>
